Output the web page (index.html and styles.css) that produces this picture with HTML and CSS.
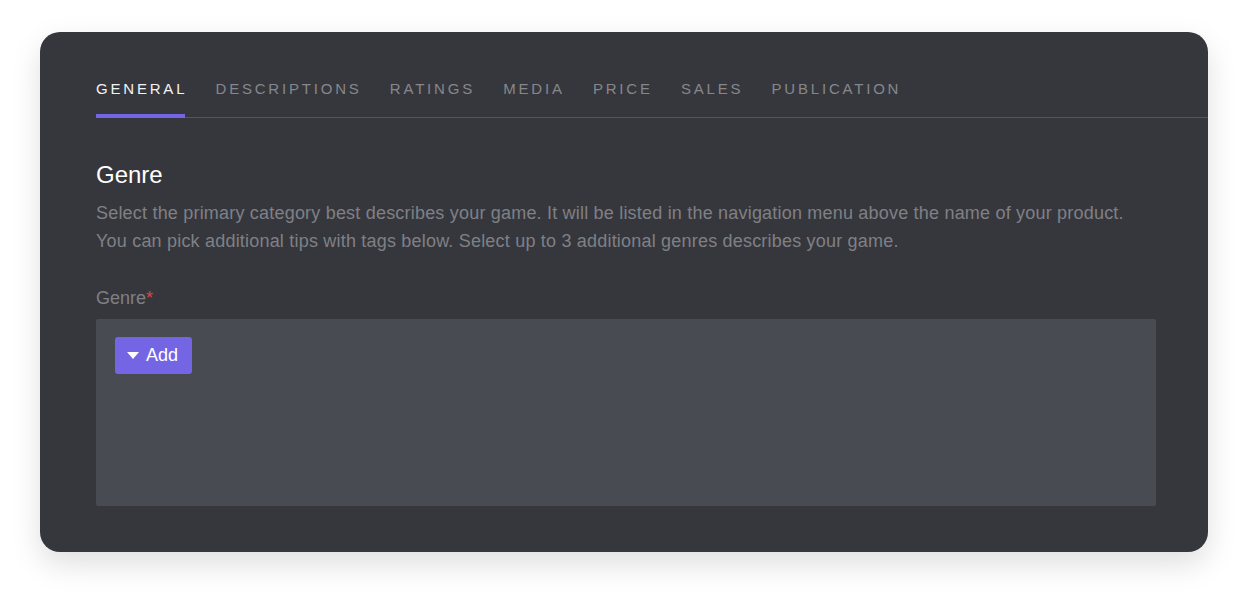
FILE: index.html
```html
<!DOCTYPE html>
<html>
<head>
<meta charset="utf-8">
<link rel="stylesheet" href="styles.css">
</head>
<body>
<div class="card">
  <nav class="tabs">
    <div class="tab active">General</div>
    <div class="tab">Descriptions</div>
    <div class="tab">Ratings</div>
    <div class="tab">Media</div>
    <div class="tab">Price</div>
    <div class="tab">Sales</div>
    <div class="tab">Publication</div>
  </nav>
  <section class="content">
    <h2 class="title">Genre</h2>
    <p class="desc">Select the primary category best describes your game. It will be listed in the navigation menu above the name of your product.<br>You can pick additional tips with tags below. Select up to 3 additional genres describes your game.</p>
    <div class="label">Genre<span class="req">*</span></div>
    <div class="box">
      <button class="add"><span class="caret"></span>Add</button>
    </div>
  </section>
</div>
</body>
</html>
```

FILE: styles.css
```css
* { box-sizing: border-box; }
html, body { margin: 0; padding: 0; background: #ffffff; }
body {
  font-family: "Liberation Sans", Arial, sans-serif;
  padding: 32px 40px 48px;
}
.card {
  background: #36373c;
  border-radius: 20px;
  height: 520px;
  padding: 0 0 0 56px;
  box-shadow: 0 12px 30px rgba(0, 0, 0, 0.13);
}
.tabs {
  display: flex;
  gap: 31px;
  border-bottom: 1px solid #55565c;
  padding-top: 48px;
}
.tab {
  position: relative;
  font-size: 15px;
  text-transform: uppercase;
  letter-spacing: 2.8px;
  color: #86878c;
  padding-bottom: 19px;
  line-height: 18px;
  margin-right: -2.8px;
}
.tab.active {
  color: #f2f2f3;
}
.tab.active::after {
  content: "";
  position: absolute;
  left: 0;
  right: 2px;
  bottom: -1px;
  height: 4px;
  background: #7465e4;
}
.content { padding-right: 52px; }
.title {
  margin: 43px 0 0;
  font-size: 24px;
  font-weight: 400;
  color: #ffffff;
  line-height: 28px;
}
.desc {
  margin: 10px 0 0;
  font-size: 18px;
  line-height: 28px;
  letter-spacing: 0.2px;
  color: #7f8086;
  white-space: nowrap;
}
.label {
  margin-top: 33px;
  font-size: 18px;
  line-height: 20px;
  color: #7f8086;
}
.req { color: #e0424a; }
.box {
  margin-top: 11px;
  height: 187px;
  background: #494b53;
  border-radius: 2px;
  padding: 18px 19px;
}
.add {
  display: flex;
  align-items: center;
  gap: 7px;
  height: 37px;
  width: 77px;
  padding: 0 0 0 12px;
  border: 0;
  border-radius: 3px;
  background: #7465e4;
  color: #ffffff;
  font-family: "Liberation Sans", Arial, sans-serif;
  font-size: 18px;
}
.caret {
  width: 0;
  height: 0;
  border-left: 6px solid transparent;
  border-right: 6px solid transparent;
  border-top: 7px solid #ffffff;
}
```
